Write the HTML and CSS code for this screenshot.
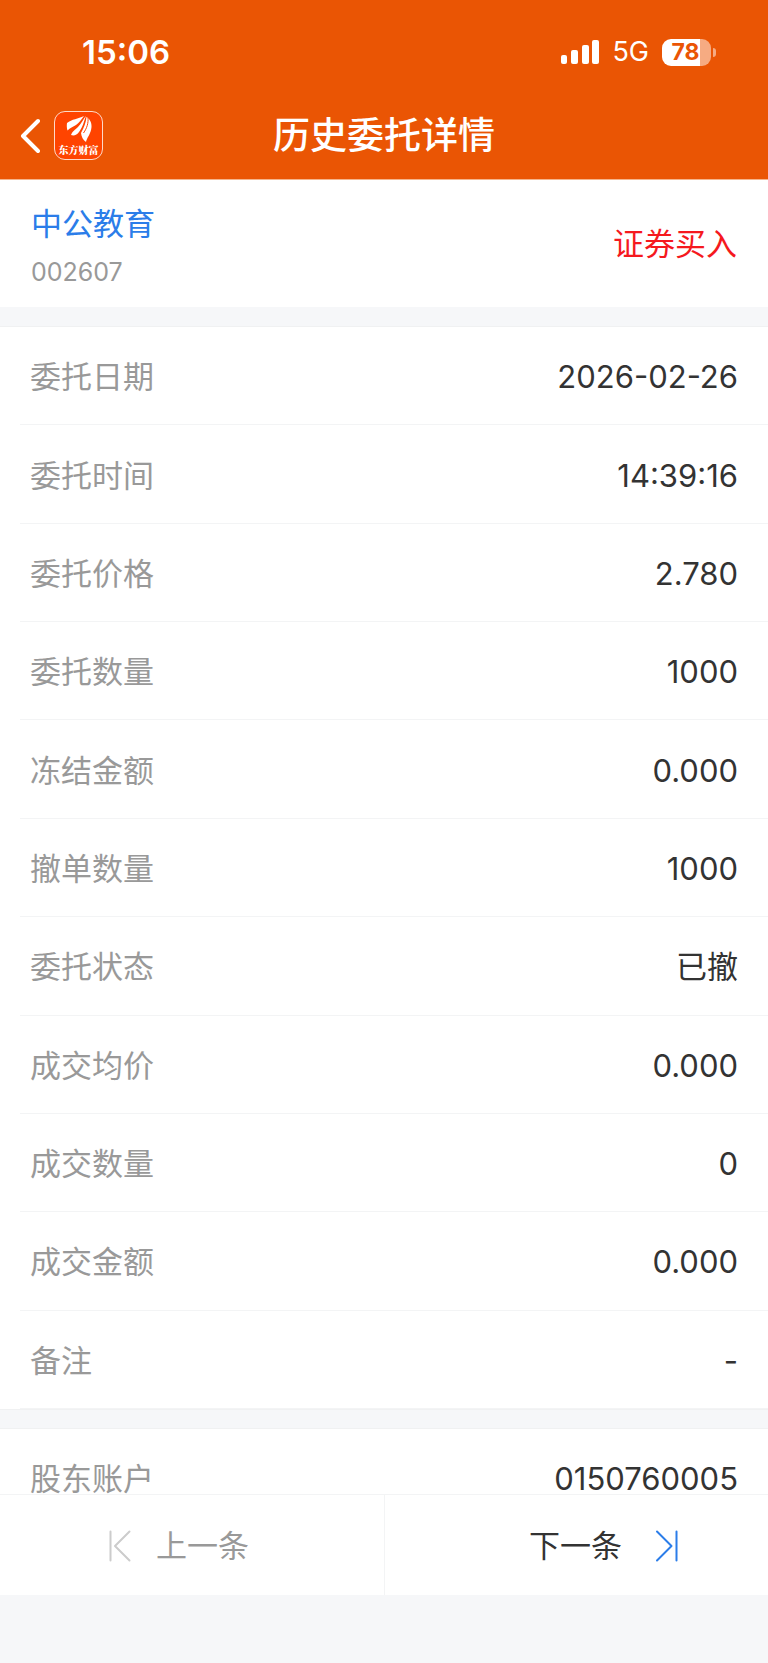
FILE: index.html
```html
<!DOCTYPE html>
<html lang="zh-CN">
<head>
<meta charset="utf-8">
<meta name="viewport" content="width=device-width, initial-scale=1">
<title>历史委托详情</title>
<link rel="stylesheet" href="styles.css">
</head>
<body class="page">
<header class="header">
  <div class="status">
    <time class="status-time">15:06</time>
    <div class="status-right">
      <svg class="signal" viewBox="0 0 38 24" aria-hidden="true">
        <rect x="0" y="15" width="6" height="9" rx="2"/>
        <rect x="10" y="10" width="7" height="14" rx="2"/>
        <rect x="21" y="5" width="7" height="19" rx="2"/>
        <rect x="31" y="0" width="7" height="24" rx="2"/>
      </svg>
      <span class="network">5G</span>
      <span class="battery"><span class="battery-body">78</span><span class="battery-cap"></span></span>
    </div>
  </div>
  <div class="navbar">
    <div class="nav-left">
      <button class="back" type="button" aria-label="返回">
        <svg class="back-icon" viewBox="0 0 20 36" aria-hidden="true"><path d="M18 3 3 18 18 33"/></svg>
      </button>
      <a class="brand" href="#">
        <svg class="brand-mark" viewBox="0 0 26 28" aria-hidden="true">
          <path d="M1 8C6 4 12 4 18 1C15 5 13 8 10 10C7 12 4 13 1.500 15.500C.8 13 .6 10.500 1 8Z"/>
          <path d="M20 .8C17 5 15 9 12 12C9 15 6.500 16 5 20C8 21 11 20 13 17C17 12 18 6 20 .8Z"/>
          <path d="M20.500 2C20 7 18 13 15 18C15.500 22 17 25 20 27C20.500 23 25 19 25.500 12C25.800 8 24 4 20.500 2Z"/>
          <path class="brand-cut" d="M22 2.500C22.500 8 21 13 17.500 18"/>
        </svg>
        <span class="brand-name">东方财富</span>
      </a>
    </div>
    <h1 class="title">历史委托详情</h1>
  </div>
</header>

<main class="content">
  <section class="summary">
    <div class="stock">
      <a class="stock-name" href="#">中公教育</a>
      <span class="stock-code">002607</span>
    </div>
    <span class="side">证券买入</span>
  </section>

  <dl class="details">
    <div class="row"><dt>委托日期</dt><dd>2026-02-26</dd></div>
    <div class="row"><dt>委托时间</dt><dd>14:39:16</dd></div>
    <div class="row"><dt>委托价格</dt><dd>2.780</dd></div>
    <div class="row"><dt>委托数量</dt><dd>1000</dd></div>
    <div class="row"><dt>冻结金额</dt><dd>0.000</dd></div>
    <div class="row"><dt>撤单数量</dt><dd>1000</dd></div>
    <div class="row"><dt>委托状态</dt><dd>已撤</dd></div>
    <div class="row"><dt>成交均价</dt><dd>0.000</dd></div>
    <div class="row"><dt>成交数量</dt><dd>0</dd></div>
    <div class="row"><dt>成交金额</dt><dd>0.000</dd></div>
    <div class="row"><dt>备注</dt><dd>-</dd></div>
  </dl>

  <dl class="account">
    <div class="row"><dt>股东账户</dt><dd>0150760005</dd></div>
  </dl>
</main>

<nav class="pager" aria-label="委托切换">
  <button class="pager-button pager-prev" type="button" disabled>
    <svg class="pager-icon" viewBox="0 0 24 32" aria-hidden="true"><path d="M2.500 1.500V30.500M21.500 1.500 7 16 21.500 30.500"/></svg>
    上一条
  </button>
  <button class="pager-button pager-next" type="button">
    下一条
    <svg class="pager-icon" viewBox="0 0 24 32" aria-hidden="true"><path d="M21.500 1.500V30.500M2 1.500 16.500 16 2 30.500"/></svg>
  </button>
</nav>
</body>
</html>
```
FILE: styles.css
```css
* {
  box-sizing: border-box;
}

.page {
  display: flex;
  flex-direction: column;
  min-height: 100vh;
  margin: 0;
  padding-bottom: 68px;
  background: #f6f7f9;
  color: #333;
  font-family: Inter, "Noto Sans CJK SC", sans-serif;
  font-size: 31px;
  line-height: 40px;
}

button {
  padding: 0;
  border: 0;
  background: none;
  color: inherit;
  font: inherit;
}

a {
  color: inherit;
  text-decoration: none;
}

/* Header */
.header {
  height: 180px;
  border-bottom: 1px solid #f5b48c;
  background: #ea5504;
  color: #fff;
}

.status {
  display: flex;
  align-items: center;
  justify-content: space-between;
  height: 92px;
  padding: 12px 52px 0 82px;
}

.status-time {
  font-size: 33px;
  font-weight: 600;
}

.status-right {
  display: flex;
  align-items: center;
}

.signal {
  width: 38px;
  height: 24px;
  margin-right: 13px;
  fill: #fff;
}

.network {
  margin-right: 13px;
  font-size: 27px;
}

.battery {
  display: flex;
  align-items: center;
  gap: 2px;
}

.battery-body {
  width: 49px;
  height: 27px;
  padding-right: 2px;
  border-radius: 9px;
  background: linear-gradient(90deg, #fff 78%, #f6ab82 78%);
  color: #ea5504;
  font-size: 23px;
  font-weight: 700;
  line-height: 27px;
  text-align: center;
}

.battery-cap {
  width: 3px;
  height: 9px;
  border-radius: 0 3px 3px 0;
  background: #f6ab82;
}

.navbar {
  display: grid;
  grid-template-columns: 1fr auto 1fr;
  align-items: center;
  height: 87px;
  padding: 0 20px;
}

.nav-left {
  display: flex;
  align-items: center;
  gap: 14px;
}

.back {
  display: flex;
}

.back-icon {
  width: 20px;
  height: 36px;
  fill: none;
  stroke: #fff;
  stroke-width: 4;
  stroke-linecap: round;
  stroke-linejoin: round;
}

.brand {
  display: flex;
  flex-direction: column;
  align-items: center;
  width: 49px;
  height: 49px;
  padding-top: 3px;
  border: 1px solid #ffd9c8;
  border-radius: 11px;
  background: #ff4400;
}

.brand-mark {
  width: 26px;
  height: 28px;
  flex: none;
  fill: #fff;
}

.brand-cut {
  fill: none;
  stroke: #ff4400;
}

.brand-name {
  font-family: "Noto Serif CJK SC", "Noto Sans CJK SC", serif;
  font-size: 10px;
  font-weight: 900;
  line-height: 14px;
  white-space: nowrap;
}

.title {
  margin: 0;
  font-size: 37px;
  font-weight: 500;
}

/* Content */
.content {
  display: flex;
  flex: 1;
  flex-direction: column;
}

.summary {
  display: flex;
  align-items: center;
  justify-content: space-between;
  height: 127px;
  padding: 0 31px;
  background: #fff;
}

.stock {
  display: flex;
  flex-direction: column;
  gap: 8px;
  padding-top: 8px;
}

.stock-name {
  color: #2b7de9;
}

.stock-code {
  color: #999;
  font-size: 25px;
}

.side {
  color: #f5191e;
}

.details {
  display: grid;
  flex: 1;
  grid-auto-rows: 1fr;
  margin: 20px 0;
  background: #fff;
  box-shadow: 0 0 0 1px #f0f1f2;
}

.row {
  display: flex;
  align-items: center;
  justify-content: space-between;
  margin-left: 20px;
  padding: 3px 30px 0 10px;
  border-bottom: 1px solid #f3f4f5;
}

.row dt {
  color: #999;
}

.row dd {
  margin: 0;
}

.account {
  height: 65px;
  margin: 0;
  overflow: hidden;
  background: #fff;
  box-shadow: 0 0 0 1px #f0f1f2;
}

.account .row {
  height: 98px;
}

/* Bottom pager */
.pager {
  display: grid;
  grid-template-columns: 1fr 1fr;
  height: 101px;
  border-top: 1px solid #f3f4f5;
  background: #fff;
}

.pager-button {
  display: flex;
  align-items: center;
  gap: 24px;
  padding-top: 2px;
}

.pager-prev {
  padding-left: 108px;
  color: #999;
}

.pager-next {
  justify-content: flex-end;
  gap: 33px;
  padding-right: 89px;
  border-left: 1px solid #f3f4f5;
}

.pager-icon {
  width: 24px;
  height: 32px;
  fill: none;
  stroke: #2b7de9;
  stroke-width: 2;
  stroke-linecap: round;
  stroke-linejoin: round;
}

.pager-prev .pager-icon {
  stroke: #ccc;
}
```
